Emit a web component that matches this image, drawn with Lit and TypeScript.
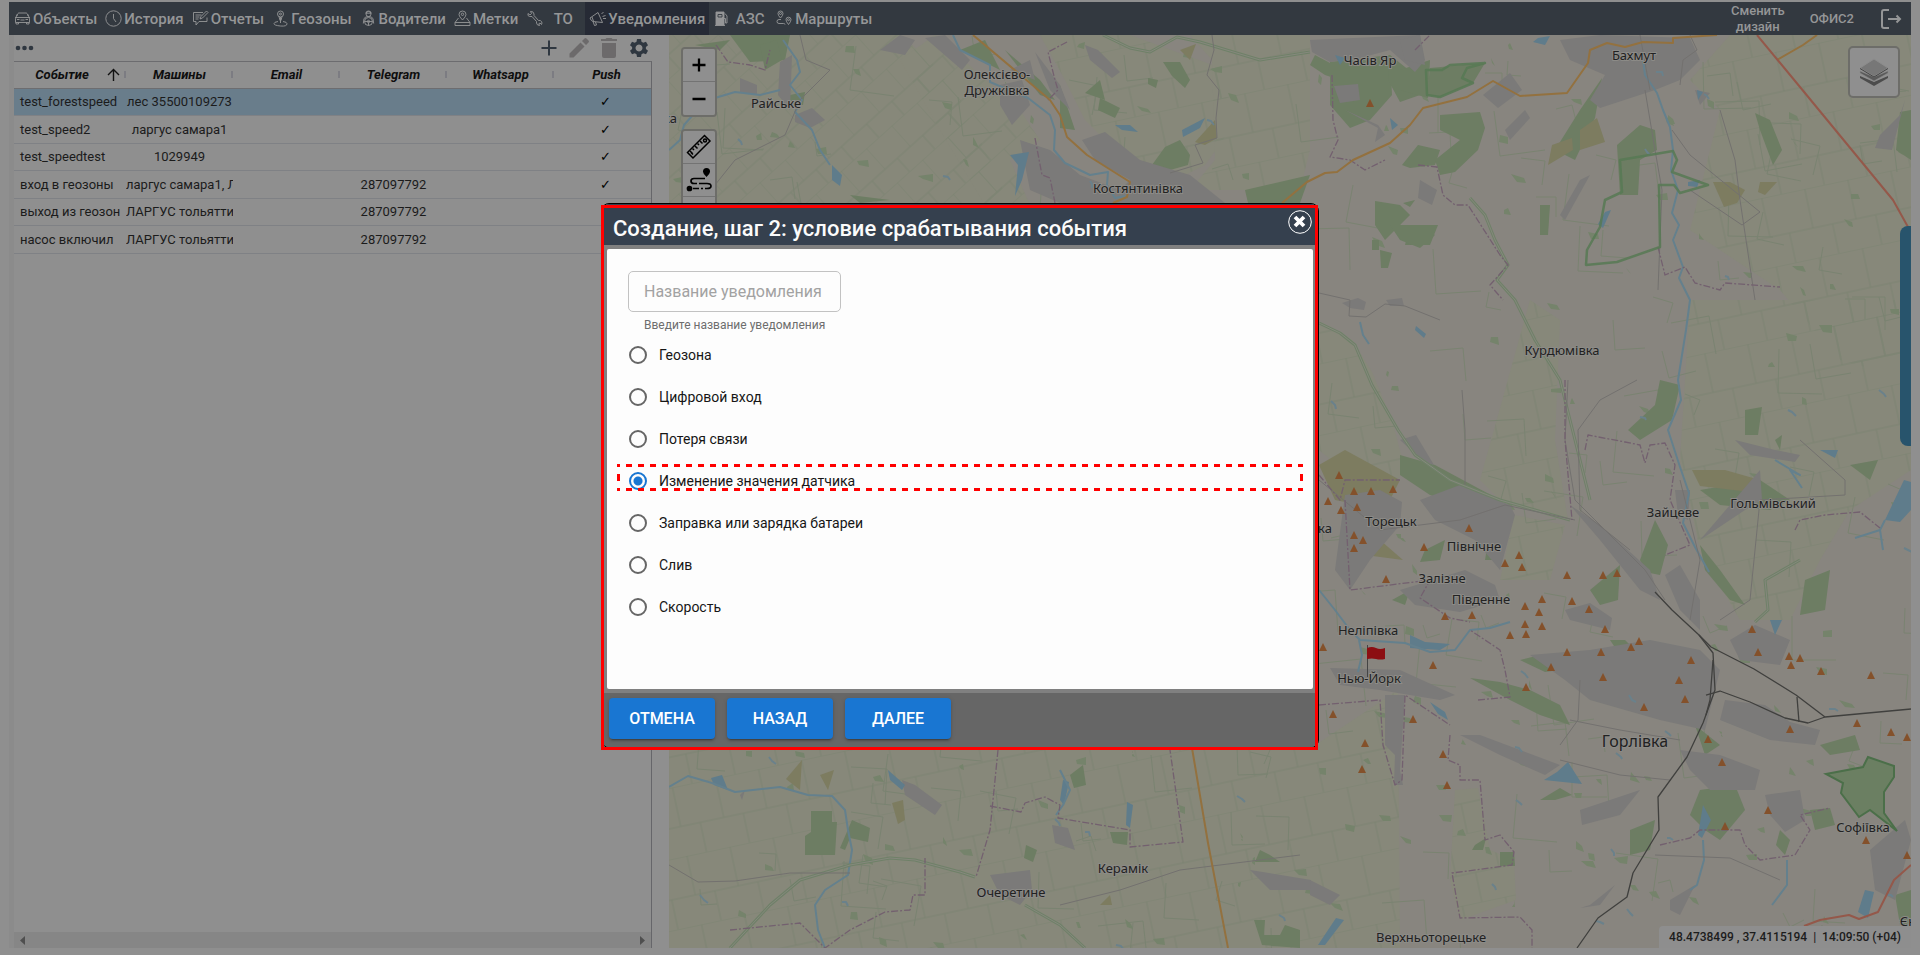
import { LitElement, html, svg, css } from "lit";
import { customElement, state } from "lit/decorators.js";

type Pt = [number, number];

/* ---------- icons ---------- */
const icons: Record<string, unknown> = {
  car: svg`<path d="M2 7 4 3.500Q4.300 3 5 3h7q.7 0 1 .5L15 7M1 7.500h15M2.500 7.500Q1.500 8 1.500 9v3.500h14V9q0-1-1-1.500M2 12.500V14h2.500v-1.500M12.500 12.500V14H15v-1.500M3 9.500h2.500M11.500 9.500H14M6.500 10h4M3.500 5.500 2 5M13.500 5.500 15 5"/>`,
  clock: svg`<circle cx="8.500" cy="8.500" r="7.700"/><path d="M8.500 4v4.500l2.500 3.500"/>`,
  chat: svg`<path d="M11 2.500H1.500v9H4V15l3-3.500h8V7.500M3.500 5h6M3.500 7h4M3.500 9h3M8 9l1-2.500L14.500 1 16 2.500 10.500 8 8 9"/>`,
  pin: svg`<circle cx="8.500" cy="4" r="3"/><path d="M8.500 7v6M7 6.500l1 4M10 6.500l-1 4M6 11.500q-4 .5-4 2.200T8.500 16 15 13.700q0-1.700-4-2.200"/><circle cx="8.500" cy="4" r="1"/>`,
  driver: svg`<circle cx="8.500" cy="4" r="2.500"/><path d="M5.500 3.200h6M6 3q0-2 2.500-2T11 3M4 8.500q1.500-2 4.500-2t4.500 2l.7 5M3.300 13.500l.7-5"/><circle cx="8.500" cy="11.500" r="4"/><circle cx="8.500" cy="11.500" r="1.200"/><path d="M4.500 11.500h8M8.500 12.500v3"/>`,
  mark: svg`<path d="M8.500 10Q5 6.500 5 4.500A3.500 3.500 0 0 1 12 4.500Q12 6.500 8.500 10M4.500 8 1 12.500h15L12.500 8M1 12.500v3h15v-3"/><circle cx="8.500" cy="4.300" r="1.200"/>`,
  wrench: svg`<path d="M2 3.500l2 1.500 1.500-1.500L4.500 1.500Q7.500 1 8 4v1.500l4.500 5q2-.5 3 1t0 3L14 13l-1.200.8.7 1.700q-2.500 0-3-2.500v-1.500l-4.500-5Q3 7 2 5.500z"/>`,
  horn: svg`<path d="M1 8 9 2.500l4.500 10L4 11.500Q2 11 1 8M4 11.500l1.500 4 2-.5-1-3M3 7l1.500 4.200M12.500 4 14.500 2M13.500 6.500l3-1M14 8.500h3"/>`,
  fuel: svg`<path fill="currentColor" d="M3 2h8v13H3z"/><path stroke="#343a42" d="M5 4.500h4v2.500H5z"/><path d="M2 15.500h10M11 8.500h1.500V13H14V6l-2-2.500"/>`,
  route: svg`<path d="M4.500 8Q2 5.500 2 3.500a2.500 2.500 0 0 1 5 0Q7 5.500 4.500 8M12.500 14.500Q10 11.500 10 9.700a2.500 2.500 0 0 1 5 0q0 1.800-2.500 4.800M5 9.500H3q-2 0-2 2t2 2h4.500q1.500 0 1.500 1"/><circle cx="4.500" cy="3.500" r="1"/><circle cx="12.500" cy="9.700" r="1"/>`,
};
const navIcon = (n: string) => svg`<svg class="nav-icon" viewBox="0 0 17 17" aria-hidden="true">${icons[n]}</svg>`;

/* ---------- data ---------- */
const NAV: [string, string][] = [
  ["car", "Объекты"], ["clock", "История"], ["chat", "Отчеты"], ["pin", "Геозоны"], ["driver", "Водители"],
  ["mark", "Метки"], ["wrench", "ТО"], ["horn", "Уведомления"], ["fuel", "АЗС"], ["route", "Маршруты"],
];
const COLS = ["Событие", "Машины", "Email", "Telegram", "Whatsapp", "Push"];
const ROWS: string[][] = [
  ["test_forestspeed", "лес 35500109273", "", "", "", "✓"],
  ["test_speed2", "ларгус самара1", "", "", "", "✓"],
  ["test_speedtest", "1029949", "", "", "", "✓"],
  ["вход в геозоны", "ларгус самара1, Л", "", "287097792", "", "✓"],
  ["выход из геозон", "ЛАРГУС тольятти", "", "287097792", "", "✓"],
  ["насос включил", "ЛАРГУС тольятти", "", "287097792", "", "✓"],
];
const CONDITIONS = [
  "Геозона", "Цифровой вход", "Потеря связи", "Изменение значения датчика",
  "Заправка или зарядка батареи", "Слив", "Скорость",
];

/* ---------- map data, in map units ---------- */
const FARM = [
  "669,35 900,35 930,60 960,100 985,150 1010,205 669,205",
  "900,60 935,35 1020,110 1040,140 1010,160 1030,205 985,205 940,130",
  "1040,35 1130,35 1240,75 1215,120 1230,130 1205,165 1155,190 1085,120 1065,80",
  "1190,35 1310,35 1310,150 1300,190 1190,190 1215,160 1212,60",
  "1730,35 1911,35 1911,380 1840,360 1780,290 1690,230 1700,190 1720,110 1690,80",
  "1319,325 1352,340 1372,372 1392,420 1405,470 1380,500 1319,450",
  "1530,300 1560,320 1555,440 1568,520 1500,500 1480,480",
  "1690,300 1911,300 1911,470 1850,510 1820,560 1790,620 1740,620 1700,550 1680,460",
  "669,748 1192,748 1228,948 669,948",
  "1192,748 1311,748 1398,690 1400,948 1228,948",
  "1455,790 1478,788 1490,850 1514,860 1516,900 1460,920 1450,880",
  "1514,515 1565,525 1550,580 1500,580",
];
const FARM_DARK = [
  "1319,465 1345,450 1400,480 1385,510 1335,500", "1580,130 1597,118 1605,142 1580,150",
  "1195,142 1215,120 1217,138 1205,145", "1552,145 1572,138 1573,150 1548,165",
  "1713,182 1730,182 1745,190 1737,203 1724,207", "1760,182 1777,182 1765,195 1758,192",
  "892,803 903,800 905,820 898,824", "786,779 802,760 800,790", "820,775 834,770 828,790",
  "1692,470 1725,470 1760,480 1750,492 1700,486", "1403,560 1380,540 1352,535 1348,552 1365,555",
  "1180,50 1196,44 1190,60", "1100,905 1110,895 1112,905",
];
const TOWN = [
  "900,35 915,40 905,55 880,50", "925,38 945,35 970,60 962,70", "1000,85 1022,80 1030,105 1012,125 1000,105",
  "1035,52 1060,85 1070,110 1050,90", "1085,45 1098,50 1120,72 1112,78 1090,60", "1010,70 1030,60 1035,80",
  "1082,140 1105,132 1140,160 1190,175 1225,203 1060,203 1030,190 1020,140 1050,150 1080,175 1120,190 1130,180 1095,160",
  "1310,40 1420,35 1425,60 1415,72 1390,50 1360,58 1330,62 1312,52", "1334,86 1358,84 1360,100 1340,103",
  "1400,40 1420,35 1425,65 1405,60", "1560,40 1600,35 1690,38 1700,60 1680,80 1655,90 1600,108 1590,100 1605,75 1570,60",
  "1483,95 1510,73 1522,90 1498,108", "1580,180 1590,175 1565,220 1560,215", "1505,130 1525,110 1530,118 1510,140",
  "1420,180 1437,190 1432,205 1418,198", "1695,90 1710,93 1700,105", "1880,135 1900,115 1905,100 1892,150 1875,148",
  "1345,495 1380,490 1402,502 1400,525 1370,560 1350,590 1335,570", "1420,500 1460,485 1510,505 1515,515 1500,570 1475,540 1435,520",
  "1400,590 1465,570 1495,585 1500,600 1460,612 1415,605", "1570,505 1600,525 1650,570 1660,600 1640,590 1600,540",
  "1665,575 1680,565 1700,600 1700,630 1680,610", "1565,610 1590,603 1612,618 1610,630 1570,620",
  "1530,655 1590,650 1650,640 1700,650 1720,670 1705,730 1660,720 1590,700 1565,680",
  "1730,640 1755,625 1790,640 1780,665 1740,660", "1725,700 1765,705 1790,722 1820,730 1815,745 1770,740 1720,720",
  "1680,750 1720,755 1760,770 1755,790 1710,790 1690,770", "1580,810 1610,800 1640,790 1620,815 1582,825",
  "1765,795 1800,790 1805,820 1785,832 1770,815", "1460,735 1480,735 1560,765 1545,775 1500,755",
  "1385,695 1405,695 1400,770 1403,785 1394,785 1395,755 1385,745", "1330,668 1400,670 1455,695 1440,700 1380,690 1340,685",
  "1590,905 1615,885 1600,905 1580,908", "1670,900 1695,885 1680,915 1670,910", "1310,880 1340,895 1330,905 1310,895",
  "1870,850 1905,820 1911,840 1895,900 1875,890", "990,875 1030,870 1032,890 1020,905 1000,895",
  "902,780 915,785 942,805 935,815 905,795", "1052,825 1068,828 1075,850 1055,843", "1250,870 1311,880 1310,890 1270,890",
  "740,795 745,790 742,800", "780,62 792,55 790,110 778,95", "740,78 757,85 757,95 740,92", "795,115 812,108 825,120 810,128 795,122",
  "1345,110 1378,125 1385,135 1375,142 1378,128", "1735,440 1775,450 1800,455 1795,462 1750,455", "1675,490 1690,490 1688,520 1678,515",
  "1700,540 1760,470 1762,500 1745,510", "1342,303 1358,298 1366,302 1364,310 1350,308", "1386,300 1402,298 1404,306 1390,306",
  "1400,440 1416,435 1434,465 1424,462",
];
const WOOD = [
  "730,35 790,35 785,60 750,62", "760,45 777,40 782,60 765,70", "790,95 805,92 803,105 790,103",
  "960,50 985,40 1000,70 980,60", "1005,50 1040,80 1055,100 1040,95", "1060,85 1075,130 1060,128",
  "1163,62 1180,62 1190,80 1185,88 1172,76", "1148,78 1158,80 1156,88 1148,84", "1100,98 1120,108 1115,118 1098,110",
  "1165,147 1180,140 1190,155 1188,165 1170,170 1152,165", "1085,93 1105,100 1100,80", "1245,190 1310,175 1300,203 1248,203",
  "1315,55 1330,63 1340,80 1325,75 1310,65", "1330,62 1390,55 1392,95 1370,120 1350,128 1330,105", "1390,55 1415,75 1420,95 1400,102 1388,80",
  "1400,70 1430,60 1428,98 1400,90", "1430,68 1485,63 1473,83 1440,97 1427,95", "1402,165 1418,145 1440,150 1435,165 1410,168",
  "1440,115 1480,112 1485,128 1478,150 1455,172 1440,175 1435,160 1460,140 1440,130", "1602,78 1595,118 1575,160 1555,150 1580,110",
  "1617,145 1640,125 1655,130 1657,150 1640,160 1638,195 1620,195", "1755,113 1770,120 1782,150 1773,165 1760,130",
  "1403,203 1415,200 1410,207", "1410,225 1438,225 1430,245 1405,245", "1540,205 1550,205 1548,235 1540,235",
  "1375,201 1400,205 1410,215 1400,225 1385,240 1375,225", "1390,225 1420,225 1435,235 1420,248 1400,240",
  "1400,455 1435,465 1500,500 1505,515 1460,505 1430,495 1400,475", "1660,380 1680,385 1672,420 1640,440 1628,430 1655,405",
  "1640,560 1655,520 1668,545 1660,575 1645,572", "1700,545 1720,570 1745,605 1730,600 1705,570",
  "1745,410 1762,407 1758,435 1745,435", "1775,440 1782,435 1780,450", "1805,580 1830,570 1825,610 1800,615",
  "1700,490 1760,480 1790,500 1770,510 1720,505", "1850,465 1878,460 1870,480", "1590,590 1620,565 1618,600 1600,605",
  "1425,550 1445,540 1440,560 1420,562", "1392,600 1410,590 1405,605", "1490,530 1505,520 1500,560 1485,560",
  "1470,678 1500,682 1530,690 1560,705 1570,725 1540,715 1510,700", "1540,800 1560,788 1572,795 1555,800",
  "1700,790 1735,785 1745,810 1720,840 1705,830 1690,815", "1630,830 1655,820 1650,850 1630,855", "1780,830 1790,840 1785,855 1776,845",
  "1500,852 1514,852 1515,866 1500,866", "1475,845 1486,838 1483,850 1472,850", "1810,810 1830,808 1835,825 1815,830",
  "1895,895 1911,890 1911,925 1900,925", "811,811 832,811 832,822 837,822 835,855 805,855 805,836 811,832", "852,820 870,828 868,842 850,838 845,850 840,848",
  "1070,775 1083,765 1086,785 1074,788", "1254,920 1265,920 1264,935 1280,935 1285,925 1300,930 1300,948 1262,945",
  "1026,845 1037,850 1033,862 1024,858", "1110,832 1128,832 1127,845 1113,843", "1260,850 1270,855 1280,862 1255,862",
  "1900,112 1911,110 1911,160 1896,150", "1520,660 1540,655 1560,670 1545,672", "1610,640 1625,640 1640,655 1620,655",
  "1695,725 1720,745 1705,755", "1820,745 1855,735 1860,750 1830,755", "695,45 730,40 720,50", "850,195 890,200 860,203",
  "1372,240 1379,240 1379,250 1372,250", "1380,250 1392,253 1388,268 1381,268",
];
const LAKE = [
  "1182,130 1205,118 1200,128 1183,137", "1010,155 1029,152 1022,180 1015,196 1018,165", "1115,125 1130,125 1138,132 1122,130",
  "1605,212 1611,210 1603,228 1598,224", "1688,182 1700,180 1697,187 1688,186", "1697,90 1703,92 1698,100", "1557,772 1568,762 1582,784 1544,780",
  "1410,635 1425,642 1450,644 1440,650 1410,648", "1904,480 1911,482 1911,510 1900,522 1885,520", "1865,890 1874,892 1868,918 1858,912",
  "1703,805 1711,820 1702,838 1698,835", "1430,702 1445,712 1448,720 1438,714", "1063,780 1069,782 1064,805 1060,800",
  "888,770 905,785 902,790 890,780", "711,778 722,775 728,790 714,785", "1127,802 1133,805 1130,828 1126,825", "1336,918 1344,920 1325,945 1318,945",
  "1538,38 1550,36 1545,45 1533,42", "1335,55 1345,58 1340,65", "1775,635 1782,620 1770,620", "1820,450 1838,450 1835,458",
  "832,165 842,175 840,186 832,180", "1390,118 1398,125 1392,130", "1416,326 1426,334 1424,338 1415,330",
];
const RIVERS = [
  "953,35 960,50 990,65 990,82 1028,98 1050,115 1055,130 1054,150 1065,163 1090,175 1108,172 1107,185 1115,198 1125,196",
  "1643,60 1645,75 1657,93 1663,110 1670,127 1673,150 1671,170 1678,190 1672,213 1679,225 1673,240 1683,267 1679,278 1690,300 1686,330 1682,355 1678,380 1681,400 1668,430 1680,467 1689,493 1683,523 1695,547 1709,572",
  "783,40 797,60 800,72 790,85 802,100 795,112 812,130 820,150 830,165", "669,150 680,140 684,125 692,116", "715,98 735,92 760,95 780,90",
  "1319,590 1335,610 1350,630 1360,640 1405,643 1430,652 1455,650 1470,630 1490,628 1510,622",
  "669,787 688,776 712,783 735,792 780,787 808,795 832,796 845,810 848,830 852,850 848,875 825,890 815,905 818,930 825,948",
  "1060,770 1070,790 1063,805 1056,815", "1787,860 1787,885 1772,905", "1703,840 1704,860 1697,885 1690,890",
  "1885,520 1880,530 1855,538", "1880,530 1883,550", "1360,322 1363,335 1369,344",
  "1359,640 1362,655 1358,672", "1775,460 1800,475 1790,470 1802,488",
];
const ORANGE = [
  "973,35 1030,83 1050,100 1060,115 1067,137 1087,155 1130,182 1127,197 1113,203",
  "1282,203 1307,182 1325,173 1337,172 1353,160 1390,143 1410,125 1423,108 1467,97 1493,81 1520,96 1567,93 1588,63 1590,50 1607,43 1625,47 1643,42 1673,43 1673,38 1717,35",
  "1777,60 1803,45 1817,35", "1192,748 1208,843 1228,948",
];
const RED_ROADS = ["1757,35 1800,87 1893,200 1908,227 1911,235", "1804,926 1820,920 1849,915 1859,919 1878,912 1894,880 1911,865"];
const RAILS = [
  "1655,592 1672,610 1699,635 1711,647 1754,669 1796,695 1825,717 1911,709",
  "1699,635 1713,653 1715,690 1703,723 1687,757 1658,797 1659,830 1633,873 1627,897 1598,918 1577,948",
  "1706,695 1720,691 1750,702 1785,718 1808,723 1825,717", "1713,660 1710,700 1706,715", "1797,697 1799,722",
];
const GREYROADS = [
  "1212,35 1214,50 1207,75 1219,90 1216,118 1217,138 1195,145 1203,163 1170,173", "1645,90 1655,150 1662,190 1658,290",
  "669,865 698,882 735,881 790,873 850,873", "800,35 806,60 830,70 800,100 785,135 735,160 715,185",
  "1319,293 1350,300 1349,316 1366,317 1385,304 1405,306 1440,320", "1672,130 1690,155 1760,212 1742,225 1690,190",
  "1568,380 1565,440 1575,500 1600,525 1645,570 1665,600", "1578,430 1600,400 1637,380", "1578,430 1580,510 1630,550",
  "1319,480 1380,530 1460,520 1505,505 1575,520", "1060,905 1120,890 1180,870 1300,855", "1570,720 1620,730 1680,740",
  "1560,760 1620,775 1670,780", "1580,680 1578,720 1560,745", "1680,480 1700,560 1690,620", "1760,500 1750,600 1720,620",
  "1800,440 1845,480 1845,495 1760,500", "1465,485 1465,430 1462,390", "1720,110 1735,160 1740,200 1755,300",
  "1690,35 1697,50 1683,60 1680,85", "1640,35 1650,90", "1655,855 1730,858 1780,880",
];
const GREENROADS = [
  "1103,35 1130,48 1150,52 1177,37 1200,42 1260,60 1310,52",
  "1319,323 1340,333 1355,345 1372,385 1398,430 1415,455 1450,480 1500,500 1570,520",
  "730,948 770,905 800,880 850,865 890,858 915,860 960,872 975,877", "1025,905 1060,925 1085,948",
  "1470,198 1485,215 1495,240 1508,265 1497,280 1515,300 1535,340 1560,380 1590,500",
  "1800,560 1765,580 1768,610 1755,622",
];
const BORDERS = [
  "1067,42 1048,52 1055,80 1058,90 1048,100", "1035,138 1042,175 1050,178 1055,203", "1332,75 1333,120 1338,140 1330,157 1350,160 1365,170 1385,160",
  "1418,165 1437,167 1443,195 1455,205 1468,205 1500,255 1508,265 1490,285 1503,300", "1415,50 1430,35",
  "998,750 990,830 976,877", "990,806 1021,812 1025,803 1045,797 1060,805 1058,818 1130,830 1130,847 1183,842 1170,750",
  "1345,500 1350,590 1430,580 1420,598 1450,618 1470,622", "1319,475 1340,500 1345,480 1400,480", "1585,450 1588,435 1625,442 1640,445 1645,463 1650,445 1665,443 1675,465 1670,500 1690,545 1665,555",
  "1565,380 1565,440 1572,520", "1795,530 1800,520 1825,515 1860,512 1880,528", "1478,700 1510,697 1505,670 1500,650 1470,630",
  "1450,735 1448,760 1460,765 1460,780 1480,780 1485,840 1500,835 1514,852 1512,865 1452,873 1460,918 1520,917 1532,930 1532,948",
  "1319,705 1380,700 1383,745 1395,785 1402,780 1405,695 1450,725", "730,930 800,923 825,948 850,930 885,912 910,910 913,895 925,895 925,858",
  "1660,845 1690,838 1700,830 1740,830 1745,845 1760,860 1795,855 1810,830 1800,815 1830,808",
  "1658,247 1665,275 1685,267 1695,283 1720,290 1725,283 1780,287", "716,45 728,62 750,65 765,70 770,50",
];
const OUTLINES = [
  "1620,160 1673,151 1677,160 1672,172 1708,185 1680,193 1674,185 1659,185 1660,247 1617,262 1586,265 1587,250 1600,227 1605,200 1622,192",
  "1426,70 1442,70 1450,65 1485,63 1467,68 1462,78 1473,83 1440,97 1427,95",
];
const PARK = "1826,774 1863,767 1868,757 1894,766 1894,777 1884,792 1884,813 1897,831 1870,810 1859,817 1841,793 1843,783";
const PEAKS: Pt[] = [
  [1370,103],[1339,475],[1354,491],[1371,491],[1393,489],[1328,501],[1341,510],[1357,507],[1469,528],[1354,535],[1363,540],[1354,548],
  [1424,547],[1519,555],[1505,563],[1522,567],[1386,579],[1567,575],[1603,575],[1617,573],[1542,599],[1572,601],[1525,606],[1539,612],
  [1589,609],[1445,616],[1472,615],[1525,624],[1542,626],[1510,635],[1526,634],[1605,629],[1639,641],[1631,647],[1567,652],[1601,652],
  [1752,629],[1691,660],[1758,652],[1789,656],[1800,658],[1791,665],[1323,647],[1433,665],[1551,667],[1821,671],[1603,677],[1679,680],
  [1526,687],[1685,699],[1644,707],[1708,739],[1722,762],[1333,714],[1413,719],[1365,743],[1443,754],[1362,769],[1447,785],[1768,810],
  [1725,826],[1866,840],[1907,855],[1790,729],[1857,723],[1891,732],[1871,675],[1907,737],
];
const PLACES: [string, number, number, number][] = [
  ["Райське", 776, 108, 13], ["ка", 670, 123, 13], ["Олексієво-", 997, 79, 13], ["Дружківка", 997, 95, 13],
  ["Часів Яр", 1370, 65, 13], ["Костянтинівка", 1138, 193, 13], ["Бахмут", 1634, 60, 13], ["Курдюмівка", 1562, 355, 13],
  ["Гольмівський", 1773, 508, 13], ["Зайцеве", 1673, 517, 13], ["Торецьк", 1391, 526, 13], ["ка", 1325, 533, 13],
  ["Північне", 1474, 551, 13], ["Залізне", 1442, 583, 13], ["Південне", 1481, 604, 13], ["Неліпівка", 1368, 635, 13],
  ["Нью-Йорк", 1369, 683, 13], ["Горлівка", 1635, 747, 16], ["Софіївка", 1863, 832, 13], ["Верхньоторецьке", 1431, 942, 13],
  ["Керамік", 1123, 873, 13], ["Очеретине", 1011, 897, 13], ["Єн", 1908, 926, 13],
];

/* small groves, ponds and field tracks scattered over the countryside */
const scatter = () => {
  let seed = 77;
  const rnd = () => ((seed = (seed * 1103515245 + 12345) % 2147483648) / 2147483648);
  const r = (n: number) => Math.round(rnd() * n);
  let groves = "", ponds = "", tracks = "";
  for (let i = 0; i < 260; i++) {
    const x = 669 + r(1242), y = 35 + r(913);
    groves += `M${x} ${y}l${r(8) - 2} ${3 + r(5)}l${2 + r(8)} ${r(3)}l${r(5) - 4} ${-4 - r(4)}z`;
  }
  for (let i = 0; i < 50; i++) ponds += `M${669 + r(1242)} ${35 + r(913)}l${2 + r(4)} ${r(5)}l${r(4)} ${2 + r(2)}`;
  for (let i = 0; i < 230; i++) {
    const x = 669 + r(1242), y = 35 + r(913), a = 12 + r(35), b = r(14) - 7;
    tracks += r(1) ? `M${x} ${y}l${a} ${b}l${-b} ${a}` : `M${x} ${y}l${b} ${a}l${a} ${-b}`;
  }
  return { groves, ponds, tracks };
};
const SCATTER = scatter();

const polys = (list: string[], cls: string) => list.map((p) => svg`<polygon class=${cls} points=${p}></polygon>`);
const lines = (list: string[], cls: string) => list.map((p) => svg`<polyline class=${cls} points=${p}></polyline>`);

@customElement("map-view")
export class MapView extends LitElement {
  static styles = css`
    :host { display: block; position: relative; overflow: hidden; background: #88857f; font-family: Roboto, sans-serif; }
    .canvas { display: block; position: absolute; inset: 0; width: 100%; height: 100%; }
    .farm { fill: #87887a; }
    .farmdark { fill: #7d7c60; }
    .town { fill: #7b7a79; }
    .wood { fill: #6d7d63; }
    .grove { fill: #75836b; }
    .lake { fill: #5f7c8b; }
    .river, .pond, .track, .orange, .redroad, .rail, .grey, .greenroad, .greenroad-in, .border, .outline { fill: none; stroke-linejoin: round; }
    .river { stroke: #64808d; stroke-width: 2; }
    .pond { stroke: #6a818b; stroke-width: 2; }
    .track { stroke: #7a8371; stroke-width: 1; }
    .orange { stroke: #93713f; stroke-width: 2; }
    .redroad { stroke: #94584a; stroke-width: 2; }
    .rail { stroke: #40403e; stroke-width: 1.3; }
    .grey { stroke: #73716f; stroke-width: 1; }
    .greenroad { stroke: #6f8168; stroke-width: 3; }
    .greenroad-in { stroke: #86887d; stroke-width: 1; }
    .border { stroke: #73606f; stroke-width: 1.3; stroke-dasharray: 7 2 2 2; }
    .outline { stroke: #577953; stroke-width: 2.5; opacity: 0.85; }
    .park { fill: #6b7f62; stroke: #4b6f49; stroke-width: 2; }
    .peak { fill: #84512b; }
    .grid { fill: none; stroke: #7b8371; stroke-width: 1; }
    .place { font-family: "Noto Sans", sans-serif; fill: #222; text-anchor: middle; paint-order: stroke; stroke: #8c8b87; stroke-width: 2px; }
    .controls { position: absolute; left: 12px; top: 12px; display: grid; gap: 12px; }
    .group { display: grid; border: 2px solid #6d6d69; border-radius: 4px; overflow: hidden; }
    .ctl { width: 32px; height: 33px; padding: 0; border: 0; border-bottom: 1px solid #737373; background: #8f8f8f; display: grid; place-items: center; }
    .ctl:last-child { border-bottom: 0; }
    .glyph { width: 26px; height: 26px; }
    .layers { position: absolute; right: 11px; top: 11px; width: 52px; height: 52px; padding: 0; display: grid; place-items: center; border: 2px solid #6d6d69; border-radius: 5px; background: #8f8f8f; }
    .stack { width: 32px; height: 32px; }
    .tab { position: absolute; right: 0; top: 191px; width: 11px; height: 220px; padding: 0; border: 0; border-radius: 8px 0 0 8px; background: #28546c; }
    .coords { position: absolute; right: 0; bottom: 0; padding: 0 10px; background: #8e8e8e; border-radius: 4px 0 0 0; font-size: 12px; font-weight: 500; line-height: 22px; color: #1c1c1c; }
  `;

  render() {
    return html`
      <svg class="canvas" viewBox="669 35 1242 913" preserveAspectRatio="xMidYMid slice" role="img" aria-label="Карта">
        <defs>
          <pattern id="fields" width="34" height="46" patternUnits="userSpaceOnUse" patternTransform="rotate(-42)"><path class="grid" d="M0 0H34M0 0V28M17 28V46M0 28H34"></path></pattern>
          <pattern id="fields2" width="44" height="70" patternUnits="userSpaceOnUse" patternTransform="rotate(-12)"><path class="grid" d="M0 0H44M10 0V40M30 40V70M0 40H44"></path></pattern>
        </defs>
        ${polys(FARM, "farm")}
        ${FARM.map((p, i) => svg`<polygon points=${p} fill=${i < 2 ? "url(#fields)" : "url(#fields2)"}></polygon>`)}
        <path class="track" d=${SCATTER.tracks}></path>
        <path class="grove" d=${SCATTER.groves}></path>
        ${polys(WOOD, "wood")} ${polys(FARM_DARK, "farmdark")} ${polys(TOWN, "town")}
        <path class="pond" d=${SCATTER.ponds}></path>
        ${polys(LAKE, "lake")} ${lines(RIVERS, "river")}
        ${lines(GREENROADS, "greenroad")} ${lines(GREENROADS, "greenroad-in")}
        ${lines(GREYROADS, "grey")} ${lines(BORDERS, "border")} ${polys(OUTLINES, "outline")}
        <polygon class="park" points=${PARK}></polygon>
        ${lines(ORANGE, "orange")} ${lines(RED_ROADS, "redroad")} ${lines(RAILS, "rail")}
        ${PEAKS.map(([x, y]) => svg`<path class="peak" d=${`M${x} ${y - 4}l4 8h-8z`}></path>`)}
        ${PLACES.map(([t, x, y, s]) => svg`<text class="place" x=${x} y=${y} font-size=${s}>${t}</text>`)}
        <path d="M1367.500 645v32" stroke="#444" fill="none"></path>
        <path d="M1367 648q5-2 9 0t9 0v11q-5 1-9 0t-9 0z" fill="#8c0e12"></path>
      </svg>
      <div class="controls">
        <div class="group">
          <button class="ctl" aria-label="Приблизить"><svg class="glyph" viewBox="0 0 26 26"><path d="M13 6.500v13M6.500 13h13" stroke="#000" stroke-width="2.300"></path></svg></button>
          <button class="ctl" aria-label="Отдалить"><svg class="glyph" viewBox="0 0 26 26"><path d="M6.500 13h13" stroke="#000" stroke-width="2.300"></path></svg></button>
        </div>
        <div class="group">
          <button class="ctl" aria-label="Линейка"><svg class="glyph" viewBox="0 0 26 26" fill="none" stroke="#000" stroke-width="1.500"><path d="M1.500 18.500 18.500 1.500l5.500 5.500L7 24z"></path><path d="M4 17l2.500 2.500M6.500 14.500 8 16M9 12l2.500 2.500M11.500 9.500 13 11M14 7l2.500 2.500M5 18.500l2 2"></path><circle cx="19" cy="6.500" r="1.500"></circle></svg></button>
          <button class="ctl" aria-label="Маршрут"><svg class="glyph" viewBox="0 0 26 26" fill="none" stroke="#000" stroke-width="1.700"><circle cx="3.500" cy="21.500" r="2" fill="#000"></circle><path d="M20.500 10q-3.500-3.500-3.500-5.500a3 3 0 0 1 7 0q0 2-3.500 5.500" fill="#000" stroke="none"></path><path d="M19 11.500H8q-3 0-3 2.500t3 2.500h3M13 16.500h8q4 0 4 2.500t-4 2.500h-2M17 21.500h-2M13 21.500H7"></path></svg></button>
          <button class="ctl" aria-label="Область"></button>
        </div>
      </div>
      <button class="layers" aria-label="Слои"><svg class="stack" viewBox="0 0 32 32"><path d="M2 22l14 8 14-8v-2l-14 6-14-6z" fill="#4c4c4c"></path><path d="M2 17l14 8 14-8v-2l-14 6-14-6z" fill="#5a5a5a" stroke="#8a8a8a" stroke-width=".6"></path><path d="M2 12l14 8.500L30 12 16 3z" fill="#777" stroke="#8c8c8c"></path><path d="M2 12.500 16 21l14-8.500" fill="none" stroke="#444"></path></svg></button>
      <button class="tab" aria-label="Открыть панель"></button>
      <div class="coords">48.4738499 , 37.4115194 &nbsp;|&nbsp; 14:09:50 (+04)</div>
    `;
  }
}

@customElement("app-root")
export class AppRoot extends LitElement {
  @state() private condition = 3;

  static styles = css`
    * { box-sizing: border-box; }
    :host { display: flex; flex-direction: column; position: relative; height: 100vh; padding: 2px 9px 7px; box-sizing: border-box; overflow: hidden; background: #8f8f8f; font-family: Roboto, sans-serif; color: #1b1b1b; }
    button { font-family: inherit; }
    .top { display: flex; height: 33px; flex: none; background: #333940; color: #959697; }
    .nav { display: flex; flex: 1; padding-left: 1px; }
    .item { display: flex; align-items: center; gap: 2px; padding: 0 4px; color: inherit; text-decoration: none; font-size: 15px; font-weight: 500; white-space: nowrap; }
    .item.on { background: #262a35; }
    .item-text { min-width: 36px; text-align: center; }
    .nav-icon { width: 17px; height: 17px; flex: none; fill: none; stroke: currentColor; stroke-width: 0.9; }
    .account { display: flex; align-items: center; gap: 25px; padding-right: 8px; font-size: 13px; font-weight: 500; line-height: 16px; text-align: center; }
    .link { color: inherit; text-decoration: none; width: min-content; }
    .exit { width: 24px; height: 24px; padding: 0; border: 0; background: none; color: inherit; }
    .exit-icon { display: block; width: 24px; height: 24px; fill: none; stroke: currentColor; stroke-width: 2; }
    .main { display: flex; flex: 1; min-height: 0; }
    .side { display: flex; flex-direction: column; width: 643px; margin-right: 17px; padding-left: 5px; background: #8b8b8b; flex: none; }
    .tools { display: flex; align-items: center; gap: 6px; height: 26px; padding-right: 1px; background: #8f8f8f; color: #30363e; }
    .spacer { flex: 1; }
    .tool { width: 24px; height: 24px; padding: 0; border: 0; background: none; color: #2f3740; }
    .tool.off { color: #6c6a6b; }
    .tool-icon { display: block; width: 24px; height: 24px; fill: currentColor; }
    .sheet { flex: 1; min-height: 0; overflow: hidden; background: #8f8f8f; border-top: 1px solid #6c6c6f; border-right: 1px solid #66666a; }
    .grid { width: 647px; border-collapse: collapse; table-layout: fixed; font-size: 13px; }
    .c0 { width: 112px; }
    .grid th { position: relative; height: 26px; padding: 0 2px; font-style: italic; font-weight: 700; color: #0e0e0e; border-bottom: 1px solid #6d6d70; }
    .grid th:first-child { padding-right: 18px; }
    .grid th:last-child, .grid td:last-child { padding-right: 4px; }
    .grid th:not(:last-child)::after { content: ""; position: absolute; right: 0; top: 9px; width: 2px; height: 7px; background: #7c7c82; }
    .sort { position: absolute; right: 6px; top: 6px; width: 13px; height: 14px; fill: none; stroke: #111; stroke-width: 1.400; }
    .grid td { height: 27px; padding: 0; text-align: center; white-space: nowrap; overflow: hidden; border-bottom: 1px solid #7f8185; }
    .grid tr:nth-child(even) td { height: 28px; }
    .grid td:first-child { padding: 0 4px 0 6px; text-align: left; }
    .grid td:last-child { font-family: "DejaVu Sans", sans-serif; font-weight: 700; color: #000; }
    .grid .sel td { background: #697d8b; }
    .hscroll { display: flex; justify-content: space-between; align-items: center; height: 16px; padding: 0 6px; background: #868686; border-right: 1px solid #66666a; }
    .arrow { width: 5px; height: 9px; fill: #4f4f4f; }
    map-view { flex: 1; min-width: 0; }

    .overlay { position: absolute; inset: 0; display: grid; place-items: center; padding-bottom: 4px; }
    .dialog { position: relative; width: 718px; border: 1px solid #000; border-radius: 8px; background: #808080; }
    .frame { position: absolute; inset: 1px 0 -3px -1px; border: 3px solid #f00; pointer-events: none; }
    .head { display: flex; justify-content: space-between; height: 41px; padding: 6px 6px 0 11px; border-radius: 7px 7px 0 0; background: #35404e; }
    .title { margin: 0; font-size: 22px; font-weight: 500; line-height: 38px; color: #fbfbfb; }
    .close { width: 24px; height: 24px; padding: 0; border: 0; background: none; }
    .close-icon { display: block; width: 24px; height: 24px; fill: none; stroke: #fff; }
    .content { min-height: 440px; margin: 4px 5px; padding: 22px 10px 0; background: #fdfdfd; border-radius: 2px; }
    .name { display: block; width: 213px; height: 41px; margin-left: 11px; padding: 0 15px; border: 1px solid #c2c2c2; border-radius: 5px; background: transparent; font-family: inherit; font-size: 16px; color: #222; outline: 0; }
    .name::placeholder { color: #a2a2a2; opacity: 1; }
    .hint { display: block; padding: 4px 0 0 27px; font-size: 12px; line-height: 18px; color: #6d6d6d; }
    .options { margin: 0; padding: 0; border: 0; }
    .option { display: flex; align-items: center; height: 42px; padding-left: 12px; }
    .radio { appearance: none; width: 18px; height: 18px; margin: 0 12px 0 0; border: 2px solid #666; border-radius: 50%; background: transparent; }
    .radio:checked { border-color: #1976d2; background: radial-gradient(circle, #1976d2 0 4px, transparent 5px); }
    .label { font-size: 14px; line-height: 20px; color: #161616; }
    .option.marked { position: relative; }
    .option.marked::after {
      content: ""; position: absolute; inset: 4px 0 11px; pointer-events: none;
      --dash: repeating-linear-gradient(90deg, #f00 0 3px, transparent 3px 9px, #f00 9px 12px);
      --side: linear-gradient(transparent 10px, #f00 10px 17px, transparent 17px);
      background: var(--dash) top / 100% 3px no-repeat, var(--dash) bottom / 100% 3px no-repeat, var(--side) left / 3px 100% no-repeat, var(--side) right / 3px 100% no-repeat;
    }
    .foot { display: flex; gap: 12px; height: 54px; padding: 5px 7px 0; border-radius: 0 0 7px 7px; background: #666; }
    .btn { width: 106px; height: 41px; padding: 0; border: 0; border-radius: 4px; background: #1976d2; color: #fff; font-size: 16px; font-weight: 500; box-shadow: 0 3px 1px -2px #0003, 0 2px 2px #0002, 0 1px 5px #0002; }
  `;

  render() {
    return html`
      <header class="top">
        <nav class="nav">
          ${NAV.map(([icon, text]) => html`<a class="item ${icon === "horn" ? "on" : ""}" href="#${icon}">${navIcon(icon)}<span class="item-text">${text}</span></a>`)}
        </nav>
        <div class="account">
          <a class="link" href="#design">Сменить дизайн</a>
          <a class="link" href="#user">ОФИС2</a>
          <button class="exit" aria-label="Выход"><svg class="exit-icon" viewBox="0 0 24 24"><path d="M10 3H5Q3 3 3 5v14q0 2 2 2h5M9 12h12M17.500 8.500 21 12l-3.500 3.500"></path></svg></button>
        </div>
      </header>
      <main class="main">
        <section class="side">
          <div class="tools">
            <button class="tool" aria-label="Меню"><svg class="tool-icon" viewBox="0 0 24 24"><circle cx="4" cy="12" r="2.300"></circle><circle cx="10.500" cy="12" r="2.300"></circle><circle cx="17" cy="12" r="2.300"></circle></svg></button>
            <span class="spacer"></span>
            <button class="tool" aria-label="Добавить"><svg class="tool-icon" viewBox="0 0 24 24"><path d="M11 4.500h2V11h6.500v2H13v6.500h-2V13H4.500v-2H11z"></path></svg></button>
            <button class="tool off" aria-label="Изменить"><svg class="tool-icon" viewBox="0 0 24 24"><path d="M2.500 17.500V21.500h4L17.500 10.500l-4-4zM21.500 6.500q1-1 0-2l-2-2q-1-1-2 0l-2.500 2.500 4 4z"></path></svg></button>
            <button class="tool off" aria-label="Удалить"><svg class="tool-icon" viewBox="0 0 24 24"><path d="M5 7h14v13q0 2-2 2H7q-2 0-2-2zM20 3v2H4V3h4.500l1-1h5l1 1z"></path></svg></button>
            <button class="tool" aria-label="Настройки"><svg class="tool-icon" viewBox="0 0 24 24"><path fill-rule="evenodd" d="M10 3h4l.5 2.700 1.800 1L19 5.800l2 3.400L18.900 11v2l2.100 1.800-2 3.400-2.700-.9-1.800 1L14 21h-4l-.5-2.700-1.800-1-2.700.9-2-3.400L5.100 13v-2L3 9.200l2-3.400 2.700.9 1.800-1zM12 8.500a3.500 3.500 0 1 0 .01 0z"></path></svg></button>
          </div>
          <div class="sheet">
            <table class="grid">
              <thead>
                <tr>${COLS.map((c, i) => html`<th class="c${i}">${c}${i === 0 ? svg`<svg class="sort" viewBox="0 0 13 14"><path d="M6.500 13V1.500M1 7l5.500-5.500L12 7"></path></svg>` : ""}</th>`)}</tr>
              </thead>
              <tbody>
                ${ROWS.map((r, i) => html`<tr class=${i === 0 ? "sel" : ""}>${r.map((c) => html`<td>${c}</td>`)}</tr>`)}
              </tbody>
            </table>
          </div>
          <div class="hscroll">
            <svg class="arrow" viewBox="0 0 5 9"><path d="M5 0v9L0 4.500z"></path></svg>
            <svg class="arrow" viewBox="0 0 5 9"><path d="M0 0v9l5-4.500z"></path></svg>
          </div>
        </section>
        <map-view></map-view>
      </main>
      <div class="overlay">
        <form class="dialog" role="dialog" aria-labelledby="title">
          <div class="head">
            <h1 class="title" id="title">Создание, шаг 2: условие срабатывания события</h1>
            <button class="close" type="button" aria-label="Закрыть"><svg class="close-icon" viewBox="0 0 24 24"><circle cx="12" cy="12" r="11.300"></circle><path d="M7 7l9 9M16 7l-9 9" stroke-width="3.800"></path></svg></button>
          </div>
          <div class="content">
            <input class="name" id="name" type="text" placeholder="Название уведомления" />
            <label class="hint" for="name">Введите название уведомления</label>
            <fieldset class="options" aria-label="Условие срабатывания">
              ${CONDITIONS.map((c, i) => html`
                <div class="option ${i === 3 ? "marked" : ""}">
                  <input class="radio" type="radio" name="cond" id="cond${i}" .checked=${i === this.condition} @change=${() => (this.condition = i)} />
                  <label class="label" for="cond${i}">${c}</label>
                </div>`)}
            </fieldset>
          </div>
          <div class="foot">
            <button class="btn" type="button">ОТМЕНА</button>
            <button class="btn" type="button">НАЗАД</button>
            <button class="btn" type="button">ДАЛЕЕ</button>
          </div>
          <div class="frame"></div>
        </form>
      </div>
    `;
  }
}
